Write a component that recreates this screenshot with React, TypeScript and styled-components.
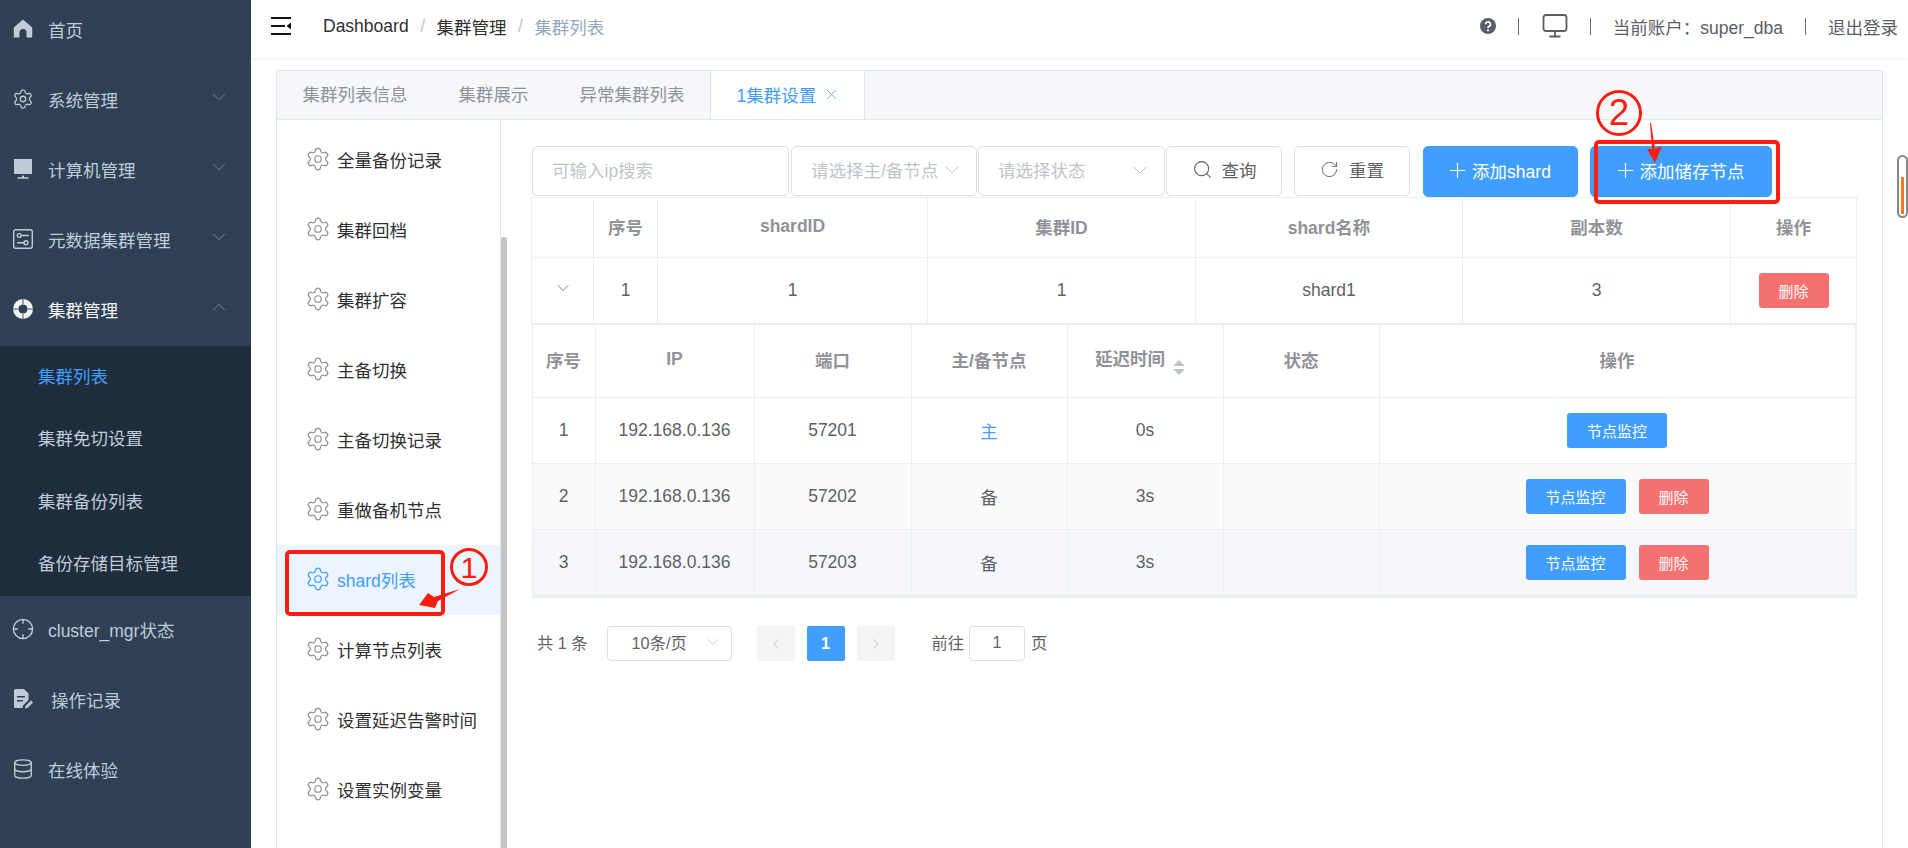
import * as React from "react";
import styled, { createGlobalStyle } from "styled-components";
import { ChevronDown, ChevronLeft, ChevronRight, ChevronUp, Database, Plus, RotateCw, Search, Settings, X } from "lucide-react";

const GlobalStyle = createGlobalStyle`
    html, body {
        margin: 0;
        padding: 0;
        height: 100%;
        overflow: hidden;
        background: #fff;
    }
    body {
        font-family: "Liberation Sans", "Noto Sans CJK SC", sans-serif;
        font-size: 17.5px;
        color: #606266;
    }
    * {
        box-sizing: border-box;
    }
`;

const Page = styled.div`
    position: relative;
    display: flex;
    width: 1908px;
    height: 848px;
    overflow: hidden;
`;

/* ---------- left navigation ---------- */

const Sidebar = styled.nav`
    flex: 0 0 251px;
    height: 100%;
    background: #304156;
    overflow: hidden;
`;

const NavList = styled.div`
    margin-top: -4px;
`;

const NavItem = styled.div<{ $open?: boolean; $textGap?: number }>`
    display: flex;
    align-items: center;
    height: 70px;
    padding: 0 0 4px 12px;
    color: ${(p) => (p.$open ? "#f4f4f5" : "#bfcbd9")};

    > span {
        margin-left: ${(p) => p.$textGap ?? 14}px;
        flex: 1;
    }
`;

const NavIcon = styled.svg`
    flex: 0 0 22px;
    width: 22px;
    height: 22px;
`;

const NavArrow = styled.div`
    width: 22px;
    margin-right: 21px;
    margin-top: -5px;
    color: #7f8b9b;
    display: flex;
`;

const SubList = styled.div`
    background: #1f2d3d;
`;

const SubItem = styled.div<{ $active?: boolean }>`
    display: flex;
    align-items: center;
    height: 62.5px;
    padding: 0 0 4px 38px;
    color: ${(p) => (p.$active ? "#409eff" : "#bfcbd9")};
`;

const HomeIcon = () => (
    <NavIcon viewBox="0 0 22 22" fill="#bfcbd9">
        <path d="M11 1.5 20.2 9.5V19.5H14.5V14.5a3.5 3.5 0 0 0-7 0V19.5H1.8V9.5Z" />
    </NavIcon>
);

const MonitorIcon = () => (
    <NavIcon viewBox="0 0 22 22" fill="#bfcbd9">
        <path d="M2 1h18v15H2zM10 17.5h2v2h-2zM5.5 19.2h11v1.5h-11z" />
    </NavIcon>
);

const SlidersIcon = () => (
    <NavIcon viewBox="0 0 22 22" fill="none" stroke="#bfcbd9" strokeWidth="1.4">
        <rect x="1.7" y="1.7" width="18.6" height="18.6" rx="2" />
        <circle cx="7.2" cy="7.5" r="1.9" />
        <path d="M9.2 7.5H17M5 14.7h7" />
        <circle cx="14" cy="14.7" r="1.9" />
    </NavIcon>
);

const BuoyIcon = () => (
    <NavIcon viewBox="0 0 22 22">
        <circle cx="11" cy="11" r="10" fill="#f4f4f5" />
        <circle cx="11" cy="11" r="4.6" fill="#304156" />
        <path d="M11 1v5M11 16v5M1 11h5M16 11h5" stroke="#304156" strokeWidth="0.9" />
    </NavIcon>
);

const TargetIcon = () => (
    <NavIcon viewBox="0 0 22 22" fill="none" stroke="#bfcbd9" strokeWidth="1.4">
        <circle cx="11" cy="11" r="9.6" />
        <path d="M11 1.4v4.4M11 16.2v4.4M1.4 11h4.4M16.2 11h4.4" />
    </NavIcon>
);

const LogIcon = () => (
    <NavIcon viewBox="0 0 22 22" fill="#bfcbd9">
        <path d="M2 2.5A1.5 1.5 0 0 1 3.500 1H12l4.500 4.500V12l-5.500 5.500L10.500 20H3.500A1.500 1.500 0 0 1 2 18.500Z" />
        <path d="M5 8h8v1.500H5zM5 12h6v1.500H5z" fill="#304156" />
        <path d="M13 20.500l.5-2.500 5.500-5.500 2 2-5.500 5.500z" />
    </NavIcon>
);

/* ---------- main column ---------- */

const Main = styled.div`
    flex: 1;
    min-width: 0;
    display: flex;
    flex-direction: column;
`;

const Header = styled.header`
    flex: 0 0 58px;
    display: flex;
    align-items: center;
    padding: 0 10px 6px 20px;
    background: #fff;
    box-shadow: 0 1px 4px rgba(0, 21, 41, 0.08);
`;

const Crumbs = styled.div`
    flex: 1;
    display: flex;
    align-items: center;
    margin-left: 32px;
`;

const Crumb = styled.span<{ $last?: boolean }>`
    color: ${(p) => (p.$last ? "#97a8be" : "#303133")};
`;

const CrumbSep = styled.span`
    margin: 0 11.5px;
    color: #c0c4cc;
`;

const HeaderBar = styled.span<{ $left: number; $right: number }>`
    width: 1px;
    height: 17px;
    margin: 0 ${(p) => p.$right}px 0 ${(p) => p.$left}px;
    background: #6d6d6d;
`;

const HeaderText = styled.span`
    color: #5a5e66;
    white-space: nowrap;
`;

const Content = styled.div`
    flex: 1;
    min-height: 0;
    padding: 12px 25px 0 25px;
`;

const TabBox = styled.div`
    height: 100%;
    display: flex;
    flex-direction: column;
    border: 1px solid #dfe4ed;
    border-bottom: 0;
`;

const TabBar = styled.div`
    flex: 0 0 48px;
    display: flex;
    background: #f5f7fa;
    border-bottom: 1px solid #e4e7ed;
`;

const Tab = styled.div<{ $active?: boolean }>`
    display: flex;
    align-items: center;
    height: ${(p) => (p.$active ? "48px" : "47px")};
    padding: 0 25.5px 2px;
    color: ${(p) => (p.$active ? "#409eff" : "#909399")};
    background: ${(p) => (p.$active ? "#fff" : "transparent")};
    border-left: ${(p) => (p.$active ? "1px solid #dfe4ed" : "0")};
    border-right: ${(p) => (p.$active ? "1px solid #dfe4ed" : "0")};

    svg {
        margin: 0 -2px 0 7px;
    }
`;

const TabBody = styled.div`
    position: relative;
    flex: 1;
    min-height: 0;
    display: flex;
`;

const SideMenu = styled.div`
    flex: 0 0 224px;
    padding-top: 5px;
    border-right: 1px solid #e6e6e6;
`;

const SideItem = styled.div<{ $active?: boolean }>`
    display: flex;
    align-items: center;
    gap: 6px;
    height: 70px;
    padding: 0 0 2px 28px;
    color: ${(p) => (p.$active ? "#409eff" : "#303133")};
    background: ${(p) => (p.$active ? "#ecf5ff" : "transparent")};

    svg {
        color: ${(p) => (p.$active ? "#409eff" : "#909399")};
    }
`;

const MenuScroll = styled.div`
    position: absolute;
    left: 224px;
    top: 117px;
    bottom: 0;
    width: 6px;
    border-radius: 3px 3px 0 0;
    background: #c4c4c4;
`;

const Panel = styled.div`
    flex: 1;
    min-width: 0;
    padding: 26px 0 0 31px;
`;

const Toolbar = styled.div`
    display: flex;
    height: 51px;
`;

const Field = styled.div<{ $w: number; $mr?: number; $pl?: number }>`
    display: flex;
    align-items: center;
    justify-content: space-between;
    flex: 0 0 ${(p) => p.$w}px;
    height: 50px;
    margin-right: ${(p) => p.$mr ?? 1}px;
    padding: 0 12px 3px ${(p) => p.$pl ?? 19}px;
    color: #c0c4cc;
    border: 1px solid #dcdfe6;
    border-radius: 5px;
    white-space: nowrap;
`;

const ToolButton = styled.button<{ $w: number; $ml?: number; $primary?: boolean; $gap: number }>`
    display: flex;
    align-items: center;
    justify-content: center;
    gap: ${(p) => p.$gap}px;
    flex: 0 0 ${(p) => p.$w}px;
    height: ${(p) => (p.$primary ? "51px" : "50px")};
    margin-left: ${(p) => p.$ml ?? 0}px;
    padding: 0 ${(p) => (p.$primary ? "5px" : "0")} 3px 0;
    font: inherit;
    color: ${(p) => (p.$primary ? "#fff" : "#606266")};
    background: ${(p) => (p.$primary ? "#409eff" : "#fff")};
    border: 1px solid ${(p) => (p.$primary ? "#409eff" : "#dcdfe6")};
    border-radius: 5px;
`;

const Table = styled.table`
    width: 1325px;
    margin-left: -1px;
    table-layout: fixed;
    border-collapse: collapse;
    border-top: 1px solid #ebeef5;
    border-right: 1px solid #ebeef5;
`;

const SubTable = styled.table`
    width: 1323px;
    table-layout: fixed;
    border-collapse: collapse;
`;

const Head = styled.th<{ $h: number; $sortable?: boolean }>`
    height: ${(p) => p.$h}px;
    padding: 0 ${(p) => (p.$sortable ? "10px" : "0")} 3px 0;
    font-weight: 700;
    color: #909399;
    background: #fff;
    border: 1px solid #ebeef5;
    text-align: center;
`;

const Cell = styled.td<{ $tone?: string; $accent?: boolean }>`
    height: 66px;
    padding: 0;
    text-align: center;
    color: ${(p) => (p.$accent ? "#409eff" : "#606266")};
    background: ${(p) => p.$tone ?? "#fff"};
    border: 1px solid #ebeef5;
`;

const NestedCell = styled.td`
    padding: 0;
    border-bottom: 2px solid #ebeef5;
`;

const Actions = styled.div`
    display: flex;
    justify-content: center;
    gap: 13px;
`;

const SmallButton = styled.button<{ $danger?: boolean }>`
    width: ${(p) => (p.$danger ? "70px" : "100px")};
    height: 35px;
    padding: 0;
    font: inherit;
    font-size: 15px;
    color: #fff;
    background: ${(p) => (p.$danger ? "#f56c6c" : "#409eff")};
    opacity: ${(p) => (p.$danger ? 0.97 : 1)};
    border: 0;
    border-radius: 3px;
`;

const SortCaret = styled.span`
    display: inline-flex;
    flex-direction: column;
    gap: 3px;
    margin-left: 8px;
    vertical-align: -1px;

    &::before,
    &::after {
        content: "";
        width: 0;
        height: 0;
        border-left: 6.5px solid transparent;
        border-right: 6.5px solid transparent;
    }
    &::before {
        border-bottom: 6px solid #c0c4cc;
    }
    &::after {
        border-top: 6px solid #c0c4cc;
    }
`;

const Pager = styled.div`
    display: flex;
    align-items: center;
    height: 35px;
    margin-top: 28px;
    padding-left: 5px;
    font-size: 16.25px;

    > span {
        padding-bottom: 3px;
    }
`;

const PagerSize = styled.div`
    display: flex;
    align-items: center;
    justify-content: space-between;
    width: 125px;
    height: 35px;
    margin: 0 25px 0 19px;
    padding: 0 8px 4px 24px;
    border: 1px solid #dcdfe6;
    border-radius: 4px;

    svg {
        color: #c0c4cc;
    }
`;

const PageBtn = styled.div<{ $current?: boolean }>`
    display: flex;
    align-items: center;
    justify-content: center;
    width: 38px;
    height: 35px;
    margin-right: 12px;
    font-weight: 700;
    color: ${(p) => (p.$current ? "#fff" : "#c0c4cc")};
    background: ${(p) => (p.$current ? "#409eff" : "#f4f4f5")};
    border-radius: 2px;
`;

const PagerJump = styled.div`
    display: flex;
    align-items: center;
    justify-content: center;
    width: 56px;
    height: 35px;
    margin: 0 6px 0 5px;
    padding-bottom: 3px;
    border: 1px solid #dcdfe6;
    border-radius: 4px;
`;

const PagerLabel = styled.span`
    margin-left: 25px;
`;

/* ---------- things painted over the screenshot ---------- */

const RedBox = styled.div<{ $x: number; $y: number; $w: number; $h: number }>`
    position: absolute;
    left: ${(p) => p.$x}px;
    top: ${(p) => p.$y}px;
    width: ${(p) => p.$w}px;
    height: ${(p) => p.$h}px;
    border: 4px solid #fb1d10;
    border-radius: 5px;
`;

const RedBadge = styled.div<{ $x: number; $y: number; $size: number }>`
    position: absolute;
    left: ${(p) => p.$x}px;
    top: ${(p) => p.$y}px;
    display: flex;
    align-items: center;
    justify-content: center;
    width: ${(p) => p.$size}px;
    height: ${(p) => p.$size}px;
    font-size: ${(p) => p.$size * 0.8}px;
    color: #fb1d10;
    border: 3px solid #fb1d10;
    border-radius: 50%;
`;

const RedArrow = styled.svg<{ $x: number; $y: number }>`
    position: absolute;
    left: ${(p) => p.$x}px;
    top: ${(p) => p.$y}px;
`;

const ScrollMark = styled.div`
    position: absolute;
    left: 1897px;
    top: 155px;
    width: 11px;
    height: 63px;
    padding: 20px 2px 2px;
    background: #fff;
    border: 2.500px solid #868686;
    border-radius: 6px;

    &::after {
        content: "";
        display: block;
        height: 100%;
        background: #f57a1f;
    }
`;

const Gear = () => <Settings size={26} strokeWidth={1.15} />;

const subMenu = ["全量备份记录", "集群回档", "集群扩容", "主备切换", "主备切换记录", "重做备机节点", "shard列表", "计算节点列表", "设置延迟告警时间", "设置实例变量"];

const nodes = [
    { id: 1, port: 57201, role: "主", delay: "0s", tone: "#fff" },
    { id: 2, port: 57202, role: "备", delay: "3s", tone: "#fafafa" },
    { id: 3, port: 57203, role: "备", delay: "3s", tone: "#f5f7fa" },
];

const App = () => {
    return (
        <Page>
            <GlobalStyle />
            <Sidebar>
                <NavList>
                    <NavItem>
                        <HomeIcon />
                        <span>首页</span>
                    </NavItem>
                    <NavItem>
                        <NavIcon as={Settings} color="#bfcbd9" strokeWidth={1.4} />
                        <span>系统管理</span>
                        <NavArrow>
                            <ChevronDown size={22} strokeWidth={1} />
                        </NavArrow>
                    </NavItem>
                    <NavItem>
                        <MonitorIcon />
                        <span>计算机管理</span>
                        <NavArrow>
                            <ChevronDown size={22} strokeWidth={1} />
                        </NavArrow>
                    </NavItem>
                    <NavItem>
                        <SlidersIcon />
                        <span>元数据集群管理</span>
                        <NavArrow>
                            <ChevronDown size={22} strokeWidth={1} />
                        </NavArrow>
                    </NavItem>
                    <NavItem $open>
                        <BuoyIcon />
                        <span>集群管理</span>
                        <NavArrow>
                            <ChevronUp size={22} strokeWidth={1} />
                        </NavArrow>
                    </NavItem>
                    <SubList>
                        <SubItem $active>集群列表</SubItem>
                        <SubItem>集群免切设置</SubItem>
                        <SubItem>集群备份列表</SubItem>
                        <SubItem>备份存储目标管理</SubItem>
                    </SubList>
                    <NavItem>
                        <TargetIcon />
                        <span>cluster_mgr状态</span>
                    </NavItem>
                    <NavItem $textGap={17}>
                        <LogIcon />
                        <span>操作记录</span>
                    </NavItem>
                    <NavItem>
                        <NavIcon as={Database} color="#bfcbd9" strokeWidth={1.5} />
                        <span>在线体验</span>
                    </NavItem>
                </NavList>
            </Sidebar>
            <Main>
                <Header>
                    <svg width="20" height="20" viewBox="0 0 20 20" fill="#111">
                        <path d="M0 1h20v2H0zM0 9h14v2H0zM0 17h20v2H0zM20 6.500v7L15.500 10z" />
                    </svg>
                    <Crumbs>
                        <Crumb>Dashboard</Crumb>
                        <CrumbSep>/</CrumbSep>
                        <Crumb>集群管理</Crumb>
                        <CrumbSep>/</CrumbSep>
                        <Crumb $last>集群列表</Crumb>
                    </Crumbs>
                    <svg width="16" height="16" viewBox="0 0 16 16">
                        <circle cx="8" cy="8" r="8" fill="#5a5e66" />
                        <path d="M5.500 6.300a2.500 2.300 0 1 1 3.700 2c-.8.5-1.200.9-1.200 1.700" fill="none" stroke="#fff" strokeWidth="1.700" />
                        <circle cx="8" cy="12.300" r="1.100" fill="#fff" />
                    </svg>
                    <HeaderBar $left={22} $right={23} />
                    <svg width="26" height="24" viewBox="0 0 26 24" fill="none" stroke="#5a5e66" strokeWidth="1.800">
                        <rect x="1.500" y="1" width="23" height="16" rx="2.500" />
                        <path d="M13 17v5M7.500 22.500h11" />
                    </svg>
                    <HeaderBar $left={22} $right={22} />
                    <HeaderText>当前账户：super_dba</HeaderText>
                    <HeaderBar $left={22} $right={22} />
                    <HeaderText>退出登录</HeaderText>
                </Header>
                <Content>
                    <TabBox>
                        <TabBar>
                            <Tab>集群列表信息</Tab>
                            <Tab>集群展示</Tab>
                            <Tab>异常集群列表</Tab>
                            <Tab $active>
                                1集群设置
                                <X size={17} strokeWidth={1.1} />
                            </Tab>
                        </TabBar>
                        <TabBody>
                            <SideMenu>
                                {subMenu.map((label) => (
                                    <SideItem key={label} $active={label === "shard列表"}>
                                        <Gear />
                                        {label}
                                    </SideItem>
                                ))}
                            </SideMenu>
                            <MenuScroll />
                            <Panel>
                                <Toolbar>
                                    <Field $w={257} $mr={2} $pl={19}>
                                        可输入ip搜索
                                    </Field>
                                    <Field $w={186}>
                                        请选择主/备节点
                                        <ChevronDown size={24} strokeWidth={1} />
                                    </Field>
                                    <Field $w={187}>
                                        请选择状态
                                        <ChevronDown size={24} strokeWidth={1} />
                                    </Field>
                                    <ToolButton $w={116} $gap={9}>
                                        <Search size={21} strokeWidth={1.2} />
                                        查询
                                    </ToolButton>
                                    <ToolButton $w={116} $ml={12} $gap={10}>
                                        <RotateCw size={19} strokeWidth={1.2} />
                                        重置
                                    </ToolButton>
                                    <ToolButton $w={155} $ml={13} $primary $gap={2}>
                                        <Plus size={25} strokeWidth={1.1} />
                                        添加shard
                                    </ToolButton>
                                    <ToolButton $w={182} $ml={12} $primary $gap={2}>
                                        <Plus size={25} strokeWidth={1.1} />
                                        添加储存节点
                                    </ToolButton>
                                </Toolbar>
                                <Table>
                                    <colgroup>
                                        <col width={62} />
                                        <col width={64} />
                                        <col width={270} />
                                        <col width={268} />
                                        <col width={267} />
                                        <col width={268} />
                                        <col width={126} />
                                    </colgroup>
                                    <thead>
                                        <tr>
                                            <Head $h={60} />
                                            <Head $h={60}>序号</Head>
                                            <Head $h={60}>shardID</Head>
                                            <Head $h={60}>集群ID</Head>
                                            <Head $h={60}>shard名称</Head>
                                            <Head $h={60}>副本数</Head>
                                            <Head $h={60}>操作</Head>
                                        </tr>
                                    </thead>
                                    <tbody>
                                        <tr>
                                            <Cell>
                                                <ChevronDown size={20} strokeWidth={1} />
                                            </Cell>
                                            <Cell>1</Cell>
                                            <Cell>1</Cell>
                                            <Cell>1</Cell>
                                            <Cell>shard1</Cell>
                                            <Cell>3</Cell>
                                            <Cell>
                                                <Actions>
                                                    <SmallButton $danger>删除</SmallButton>
                                                </Actions>
                                            </Cell>
                                        </tr>
                                        <tr>
                                            <NestedCell colSpan={7}>
                                                <SubTable>
                                                    <colgroup>
                                                        <col width={63} />
                                                        <col width={159} />
                                                        <col width={157} />
                                                        <col width={156} />
                                                        <col width={156} />
                                                        <col width={156} />
                                                        <col width={476} />
                                                    </colgroup>
                                                    <thead>
                                                        <tr>
                                                            <Head $h={73}>序号</Head>
                                                            <Head $h={73}>IP</Head>
                                                            <Head $h={73}>端口</Head>
                                                            <Head $h={73}>主/备节点</Head>
                                                            <Head $h={73} $sortable>
                                                                延迟时间
                                                                <SortCaret />
                                                            </Head>
                                                            <Head $h={73}>状态</Head>
                                                            <Head $h={73}>操作</Head>
                                                        </tr>
                                                    </thead>
                                                    <tbody>
                                                        {nodes.map((node) => (
                                                            <tr key={node.id}>
                                                                <Cell $tone={node.tone}>{node.id}</Cell>
                                                                <Cell $tone={node.tone}>192.168.0.136</Cell>
                                                                <Cell $tone={node.tone}>{node.port}</Cell>
                                                                <Cell $tone={node.tone} $accent={node.role === "主"}>
                                                                    {node.role}
                                                                </Cell>
                                                                <Cell $tone={node.tone}>{node.delay}</Cell>
                                                                <Cell $tone={node.tone} />
                                                                <Cell $tone={node.tone}>
                                                                    <Actions>
                                                                        <SmallButton>节点监控</SmallButton>
                                                                        {node.role === "备" && <SmallButton $danger>删除</SmallButton>}
                                                                    </Actions>
                                                                </Cell>
                                                            </tr>
                                                        ))}
                                                    </tbody>
                                                </SubTable>
                                            </NestedCell>
                                        </tr>
                                    </tbody>
                                </Table>
                                <Pager>
                                    <span>共 1 条</span>
                                    <PagerSize>
                                        10条/页
                                        <ChevronDown size={20} strokeWidth={1} />
                                    </PagerSize>
                                    <PageBtn>
                                        <ChevronLeft size={18} strokeWidth={1.3} />
                                    </PageBtn>
                                    <PageBtn $current>1</PageBtn>
                                    <PageBtn>
                                        <ChevronRight size={18} strokeWidth={1.3} />
                                    </PageBtn>
                                    <PagerLabel>前往</PagerLabel>
                                    <PagerJump>1</PagerJump>
                                    <span>页</span>
                                </Pager>
                            </Panel>
                        </TabBody>
                    </TabBox>
                </Content>
            </Main>

            <RedBox $x={285} $y={550} $w={160} $h={66} />
            <RedBadge $x={450} $y={548} $size={38}>1</RedBadge>
            <RedArrow $x={415} $y={585} width={48} height={26} viewBox="0 0 48 26">
                <path d="M45 4 23 16 20 23 4 20 13 8 19 12Z" fill="#fb1d10" />
            </RedArrow>
            <RedBox $x={1594} $y={140} $w={186} $h={64} />
            <RedBadge $x={1596} $y={90} $size={46}>2</RedBadge>
            <RedArrow $x={1642} $y={122} width={22} height={44} viewBox="0 0 22 44">
                <path d="M8 1 9 1 13 27 20 24 13 41 5 27 10 27Z" fill="#fb1d10" />
            </RedArrow>
            <ScrollMark />
        </Page>
    );
};

export default App;
